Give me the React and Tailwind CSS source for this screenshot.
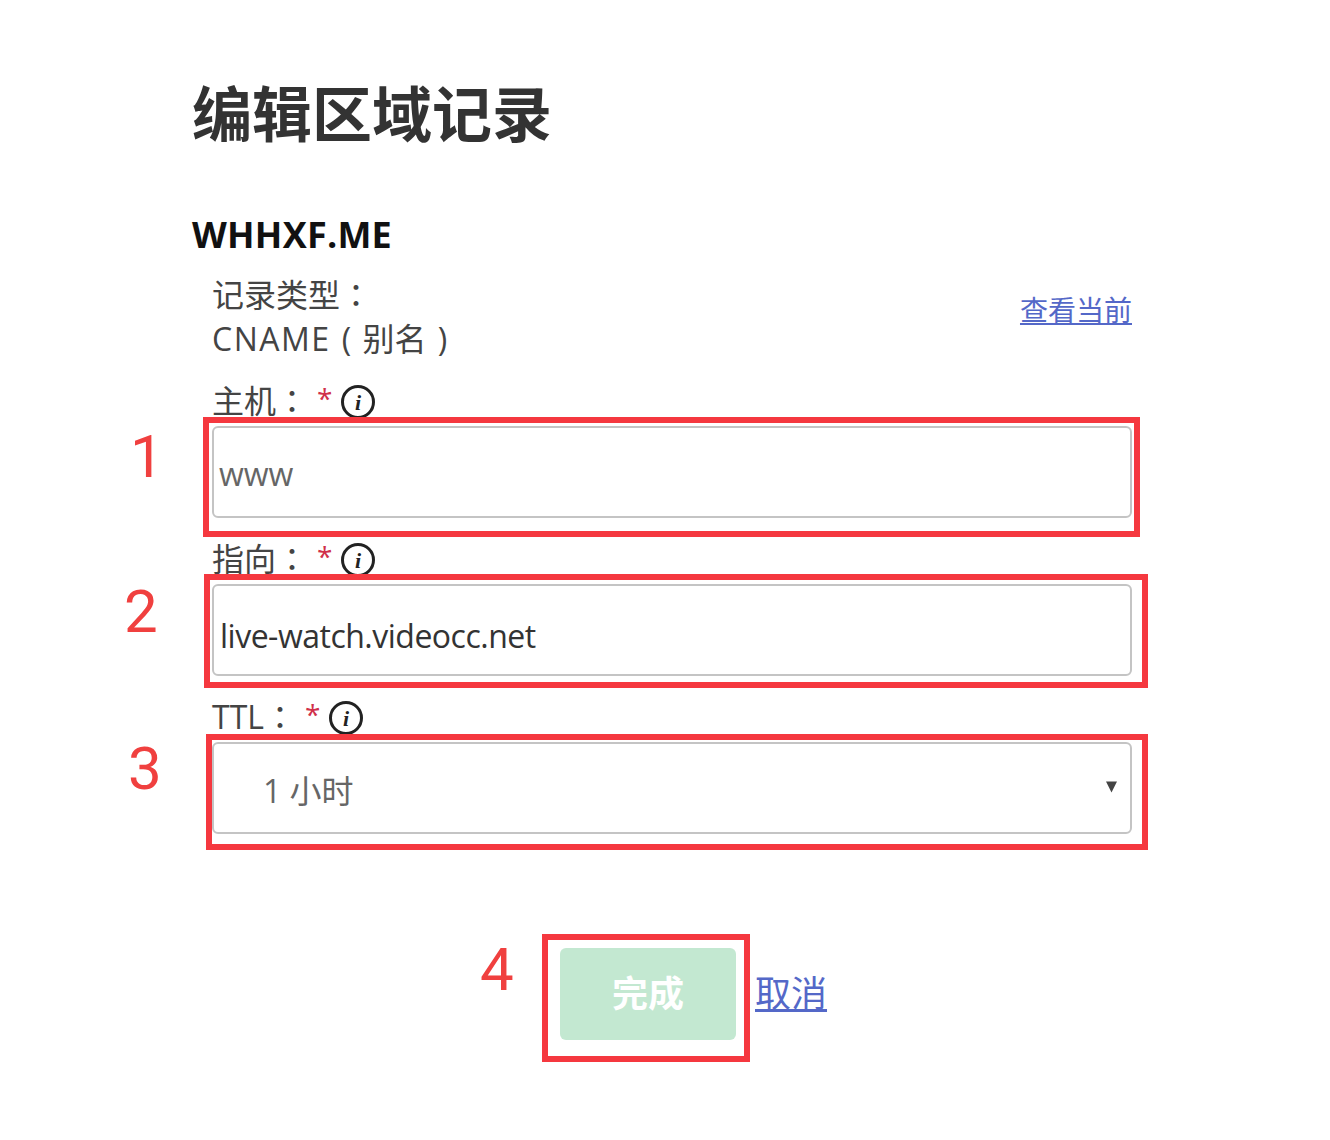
// App.jsx
const sans = '"Open Sans", "Noto Sans CJK SC", sans-serif';

// centered fullwidth punctuation, as the traditional-Chinese font draws it
function Punct({ children }) {
  return <span className="font-['Noto_Sans_CJK_TC'] leading-none">{children}</span>;
}

function Paren({ children }) {
  return <span className="inline-block w-[32px] text-center leading-none">{children}</span>;
}

function InfoIcon() {
  return (
    <svg width="34" height="34" viewBox="0 0 34 34" className="shrink-0 mt-[2px]">
      <circle cx="17" cy="17" r="15.5" fill="white" stroke="#222" strokeWidth="3" />
      <text x="17" y="25" textAnchor="middle" fontSize="22" fontStyle="italic" fontWeight="700" fontFamily="Liberation Serif, serif" fill="#222">i</text>
    </svg>
  );
}

function FieldLabel({ label }) {
  return (
    <div className="flex items-center h-[34px] pl-[20px] text-[32px] text-[#444]">
      <span>{label}<Punct>：</Punct></span>
      <span className="text-[#d0304a] text-[28px] ml-[9px] mr-[9px] leading-none -mt-[6px]">*</span>
      <InfoIcon />
    </div>
  );
}

function Annotated({ num, numClass, boxClass, children }) {
  return (
    <div className="relative">
      {children}
      <div className={`absolute border-[6px] border-[#f5383f] pointer-events-none ${boxClass}`} />
      <span className={`absolute text-[60px] leading-none text-[#f0403f] font-['Roboto'] ${numClass}`}>{num}</span>
    </div>
  );
}

export default function App() {
  return (
    <div className="w-[1330px] h-[1140px] bg-white pl-[192px] pt-[76px] overflow-hidden" style={{ fontFamily: sans }}>
      <h1 className="text-[60px] leading-[76px] font-bold text-[#333] m-0">编辑区域记录</h1>

      <h2 className="mt-[58px] text-[36px] leading-[50px] font-bold text-[#111] tracking-[0.25px] font-['Open_Sans']">WHHXF.ME</h2>

      <div className="w-[940px] flex items-center justify-between pl-[20px] text-[32px] leading-[44px] text-[#444] mt-[13px]">
        <div>
          <div>记录类型<Punct>：</Punct></div>
          <div><span className="tracking-[1.5px]">CNAME</span><Paren>(</Paren>别名<Paren>)</Paren></div>
        </div>
        <a href="#" className="text-[28px] underline text-[#5468c8] mt-[-14px]">查看当前</a>
      </div>

      <div className="mt-[23px]">
        <FieldLabel label="主机" />
      </div>
      <Annotated num="1" numClass="left-[-62px] top-[1px]" boxClass="left-[11px] top-[-9px] w-[937px] h-[120px]">
        <div className="ml-[20px] w-[920px] h-[92px] mt-[8px] border-2 border-[#c4c4c4] rounded-[6px] flex items-center pl-[5px] pt-[4px] text-[32px] text-[#666]">www</div>
      </Annotated>

      <div className="mt-[24px]">
        <FieldLabel label="指向" />
      </div>
      <Annotated num="2" numClass="left-[-68px] top-[-2px]" boxClass="left-[12px] top-[-10px] w-[944px] h-[114px]">
        <div className="ml-[20px] w-[920px] h-[92px] mt-[8px] border-2 border-[#c4c4c4] rounded-[6px] flex items-center pl-[6px] pt-[12px] text-[32px] text-[#333] tracking-[-0.5px]">live-watch.videocc.net</div>
      </Annotated>

      <div className="mt-[24px]">
        <FieldLabel label="TTL" />
      </div>
      <Annotated num="3" numClass="left-[-64px] top-[-3px]" boxClass="left-[14px] top-[-8px] w-[942px] h-[116px]">
        <div className="ml-[20px] w-[920px] h-[92px] mt-[8px] border-2 border-[#c4c4c4] rounded-[6px] flex items-center justify-between pl-[49px] pr-[13px] text-[32px] text-[#666]">
          <span className="pt-[6px]">1 小时</span>
          <svg width="11" height="14" viewBox="0 0 12 14" className="mt-[-2px]">
            <path d="M0 1H12L6 13Z" fill="#444" />
          </svg>
        </div>
      </Annotated>

      <div className="relative flex items-center mt-[114px] ml-[368px]">
        <button className="w-[176px] h-[92px] rounded-[6px] bg-[#c3e8d1] text-white text-[36px] font-bold">完成</button>
        <a href="#" className="ml-[19px] text-[36px] underline text-[#5468c8]">取消</a>
        <div className="absolute left-[-18px] top-[-14px] w-[208px] h-[128px] border-[6px] border-[#f5383f]" />
        <span className="absolute left-[-80px] top-[-8px] text-[60px] leading-none text-[#f0403f] font-['Roboto']">4</span>
      </div>
    </div>
  );
}
